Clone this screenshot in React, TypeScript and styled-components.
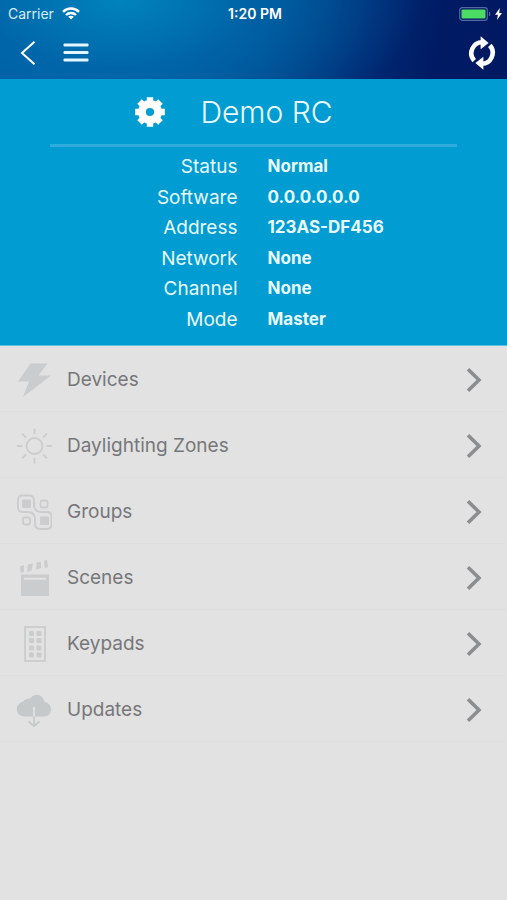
import React from "react";
import styled, { createGlobalStyle } from "styled-components";

const GlobalStyle = createGlobalStyle`
  *, *::before, *::after { box-sizing: border-box; }
  html, body, #root { min-height: 100vh; }
  body {
    margin: 0;
    background: #e2e2e2;
    font-family: Inter, "Liberation Sans", sans-serif;
  }
  button { font: inherit; color: inherit; border: 0; background: none; cursor: pointer; }
  svg { display: block; flex: none; }
`;

const Screen = styled.div`
  min-height: 100vh;
  background: #e2e2e2;
`;

const Header = styled.header`
  color: #fff;
  background:
    radial-gradient(ellipse 300px 150px at 120px 0, #0083bd 0%, rgba(0, 106, 172, 0.75) 45%, rgba(0, 84, 155, 0) 100%),
    linear-gradient(100deg, #005ba4 0%, #005aa1 30%, #00468c 52%, #002a74 72%, #001a64 86%, #001961 100%);
`;

const StatusBar = styled.div`
  display: grid;
  grid-template-columns: 1fr auto 1fr;
  align-items: center;
  height: 27px;
  padding: 0 5px 0 8px;
  font-size: 14px;
  line-height: 16px;
`;

const Carrier = styled.div`
  display: flex;
  align-items: center;
  gap: 8px;
  color: #d9ecf7;
`;

const Clock = styled.time`
  font-weight: 600;
`;

const Power = styled.div`
  display: flex;
  align-items: center;
  justify-content: flex-end;
  gap: 4px;
`;

const Toolbar = styled.nav`
  display: flex;
  align-items: center;
  height: 52px;
  padding: 0 7px 0 10px;
`;

const IconButton = styled.button<{ $push?: boolean }>`
  display: grid;
  place-items: center;
  width: 36px;
  height: 44px;
  padding: 0;
  margin-left: ${({ $push }) => ($push ? "auto" : "0")};
`;

const ToolbarGroup = styled.div`
  display: flex;
  gap: 12px;
`;

const Summary = styled.section`
  padding: 0 50px 10px;
  background: #009cd2;
  border-bottom: 1px solid #62bfdf;
  color: #e9faff;
`;

const TitleRow = styled.div`
  display: flex;
  align-items: center;
  justify-content: center;
  gap: 32px;
  height: 65px;
  padding-right: 42px;
`;

const Title = styled.h1`
  margin: 0;
  font-size: 30px;
  line-height: 38px;
  font-weight: 300;
`;

const GearButton = styled.button`
  padding: 3px;
  color: #fff;
`;

const Rule = styled.hr`
  height: 3px;
  margin: 0 0 5px;
  border: 0;
  background: #2fabdc;
`;

const Details = styled.dl`
  display: grid;
  grid-template-columns: 188fr 190fr;
  grid-auto-rows: 1fr;
  column-gap: 30px;
  align-items: center;
  min-height: 183px;
  margin: 0;
`;

const Term = styled.dt`
  text-align: right;
  font-size: 19px;
  line-height: 24px;
`;

const Value = styled.dd`
  margin: 0;
  padding-bottom: 2px;
  font-size: 17px;
  line-height: 24px;
  font-weight: 700;
`;

const Menu = styled.ul`
  margin: 0;
  padding: 0;
  list-style: none;
`;

const MenuItem = styled.li`
  border-bottom: 1px solid #dedede;
`;

const MenuButton = styled.button`
  display: flex;
  align-items: center;
  width: 100%;
  min-height: 65px;
  padding: 2px 24px 0 16px;
  text-align: left;
  color: #77777a;
`;

const MenuIcon = styled.span`
  display: block;
  width: 36px;
  height: 36px;
  margin-right: 15px;
  color: #cbcccd;
`;

const MenuLabel = styled.span`
  flex: 1;
  font-size: 19px;
  line-height: 24px;
`;

const WifiIcon = () => (
  <svg width="18" height="13" viewBox="0 0 18 13" fill="none" stroke="#fff" strokeWidth="2.400" aria-hidden="true">
    <path d="M1 4.800C5.400.4 12.600.4 17 4.800" />
    <path d="M4 8c2.800-2.700 7.200-2.700 10 0" />
    <path d="M9 12.500 6.200 9.800c1.600-1.300 4-1.300 5.600 0z" fill="#fff" stroke="none" />
  </svg>
);

const BatteryIcon = () => (
  <svg width="32" height="14" viewBox="0 0 32 14" aria-hidden="true">
    <rect x=".7" y=".7" width="27.600" height="12.600" rx="2.600" fill="none" stroke="#5668a0" strokeWidth="1.200" />
    <rect x="2.500" y="2.500" width="24" height="9" rx="1" fill="#4cdc64" />
    <path d="M30 4.700c1.800.6 1.800 4 0 4.600z" fill="#5668a0" />
  </svg>
);

const ChargeIcon = () => (
  <svg width="7" height="12" viewBox="0 0 7 12" fill="#fff" aria-hidden="true">
    <path d="M4.800 0 0 6.800h2.900L2 12l5-7H4.200z" />
  </svg>
);

const BackIcon = () => (
  <svg width="16" height="24" viewBox="0 0 16 24" fill="none" stroke="#fff" strokeWidth="2" aria-hidden="true">
    <path d="M14.500.7 2 12l12.500 11.300" />
  </svg>
);

const BarsIcon = () => (
  <svg width="26" height="20" viewBox="0 0 26 20" fill="#e4f6ff" aria-hidden="true">
    <rect x=".5" y=".5" width="25" height="3" rx="1" />
    <rect x=".5" y="8" width="25" height="3" rx="1" />
    <rect x=".5" y="15.500" width="25" height="3" rx="1" />
  </svg>
);

const SyncIcon = () => (
  <svg width="28" height="34" viewBox="0 0 28 34" aria-hidden="true">
    <g fill="none" stroke="#fff" strokeWidth="4.600">
      <path d="M6.200 24.600A10.800 11 0 0 1 14.500 6.200" />
      <path d="M21.800 9.400A10.800 11 0 0 1 13.500 27.800" />
    </g>
    <path d="M12.600.3 20.600 7 12.600 13.200z" fill="#fff" />
    <path d="M15.400 33.700 7.400 27 15.400 20.800z" fill="#fff" />
  </svg>
);

const GearIcon = () => (
  <svg width="30" height="30" viewBox="-15 -15 30 30" aria-hidden="true">
    <g fill="currentColor">
      {[0, 45, 90, 135].map((angle) => (
        <path key={angle} d="M-3.200-14.800h6.400v5h-6.400zM-3.200 9.800h6.400v5h-6.400z" transform={`rotate(${angle})`} />
      ))}
    </g>
    <circle r="8" fill="none" stroke="currentColor" strokeWidth="7.800" />
  </svg>
);

const ChevronIcon = () => (
  <svg width="18" height="26" viewBox="0 0 18 26" fill="none" stroke="#8c8d8e" strokeWidth="3.600" aria-hidden="true">
    <path d="M3 2.200 14 13 3 23.800" />
  </svg>
);

const DevicesIcon = () => (
  <svg width="36" height="36" viewBox="0 0 36 36" fill="currentColor" aria-hidden="true">
    <path d="M14.500 1.500h17L22.500 13.500H35L7 35l6-15.500H2z" />
  </svg>
);

const DaylightIcon = () => (
  <svg width="36" height="36" viewBox="0 0 36 36" fill="none" stroke="currentColor" strokeWidth="1.800" aria-hidden="true">
    <circle cx="18.500" cy="18" r="8" />
    {[0, 45, 90, 135, 180, 225, 270, 315].map((angle) => (
      <path key={angle} d="M18.500.5v5.500" transform={`rotate(${angle} 18.500 18)`} />
    ))}
  </svg>
);

const GroupsIcon = () => (
  <svg width="36" height="36" viewBox="0 0 36 36" fill="none" stroke="currentColor" strokeWidth="1.800" aria-hidden="true">
    <path d="M6 1.500H13q5 0 5 5v4q0 7.500 7.500 7.500H31q4.500 0 4.500 4.500V30q0 5-5 5H24q-5 0-5-5v-4.500q0-7.500-7-7.500H6.500Q2 18 2 13.500V6Q2 1.500 6 1.500z" />
    <rect x="6" y="5.500" width="9" height="8.500" rx="1" fill="currentColor" stroke="none" />
    <rect x="24" y="22.500" width="9" height="8.500" rx="1" fill="currentColor" stroke="none" />
    <rect x="24.500" y="6.500" width="7" height="7" rx="2" />
    <rect x="7" y="23.500" width="7" height="7" rx="2" />
  </svg>
);

const ScenesIcon = () => (
  <svg width="36" height="36" viewBox="0 0 36 36" fill="currentColor" aria-hidden="true">
    <path fillRule="evenodd" d="M5 14.500h28V35q0 1.500-1.500 1.500h-25Q5 36.500 5 35zM8 17.800v2h22v-2z" />
    <path d="M4 6.300 8 5.300V12l-3.300 1zM12 4.500l5-1.200-1.500 7.200-4.500 1.500zM20.500 2.500l4.500-1v6.500L20 10zM28 .5 31 0l1.200 7-3.400 1z" />
  </svg>
);

const KeypadsIcon = () => (
  <svg width="36" height="36" viewBox="0 0 36 36" fill="currentColor" aria-hidden="true">
    <rect x="9" y="1" width="20" height="34" fill="none" stroke="currentColor" strokeWidth="1.800" />
    {[5, 12, 19.5, 26.5].map((y) => (
      <React.Fragment key={y}>
        <rect x="13" y={y} width="5" height="5" rx="1" />
        <rect x="20.500" y={y} width="5" height="5" rx="1" />
      </React.Fragment>
    ))}
  </svg>
);

const UpdatesIcon = () => (
  <svg width="36" height="36" viewBox="0 0 36 36" fill="none" aria-hidden="true">
    <path fill="#c5c9ca" d="M9 24.500C-1.500 24.500-1.500 11 7 9.700 9 7 12 6 14.500 6.500 17.500.8 27 1.500 28.500 10c8.500.8 9 14.500-.5 14.500z" />
    <path d="M18 15v9.500" stroke="#e2e2e2" strokeWidth="1.800" />
    <path d="M18 24.500V33.500M12.500 29.500 18 34l5.500-4.500" stroke="#c5c9ca" strokeWidth="1.800" />
  </svg>
);

const details = [
  ["Status", "Normal"],
  ["Software", "0.0.0.0.0.0"],
  ["Address", "123AS-DF456"],
  ["Network", "None"],
  ["Channel", "None"],
  ["Mode", "Master"],
];

const menu = [
  { label: "Devices", Icon: DevicesIcon },
  { label: "Daylighting Zones", Icon: DaylightIcon },
  { label: "Groups", Icon: GroupsIcon },
  { label: "Scenes", Icon: ScenesIcon },
  { label: "Keypads", Icon: KeypadsIcon },
  { label: "Updates", Icon: UpdatesIcon },
];

export default function App() {
  return (
    <>
      <GlobalStyle />
      <Screen>
        <Header>
          <StatusBar>
            <Carrier>
              Carrier
              <WifiIcon />
            </Carrier>
            <Clock>1:20 PM</Clock>
            <Power>
              <BatteryIcon />
              <ChargeIcon />
            </Power>
          </StatusBar>
          <Toolbar>
            <ToolbarGroup>
              <IconButton type="button" aria-label="Back"><BackIcon /></IconButton>
              <IconButton type="button" aria-label="Menu"><BarsIcon /></IconButton>
            </ToolbarGroup>
            <IconButton type="button" aria-label="Refresh" $push><SyncIcon /></IconButton>
          </Toolbar>
        </Header>
        <main>
          <Summary>
            <TitleRow>
              <GearButton type="button" aria-label="Settings"><GearIcon /></GearButton>
              <Title>Demo RC</Title>
            </TitleRow>
            <Rule />
            <Details>
              {details.map(([term, value]) => (
                <React.Fragment key={term}>
                  <Term>{term}</Term>
                  <Value>{value}</Value>
                </React.Fragment>
              ))}
            </Details>
          </Summary>
          <Menu>
            {menu.map(({ label, Icon }) => (
              <MenuItem key={label}>
                <MenuButton type="button">
                  <MenuIcon><Icon /></MenuIcon>
                  <MenuLabel>{label}</MenuLabel>
                  <ChevronIcon />
                </MenuButton>
              </MenuItem>
            ))}
          </Menu>
        </main>
      </Screen>
    </>
  );
}
